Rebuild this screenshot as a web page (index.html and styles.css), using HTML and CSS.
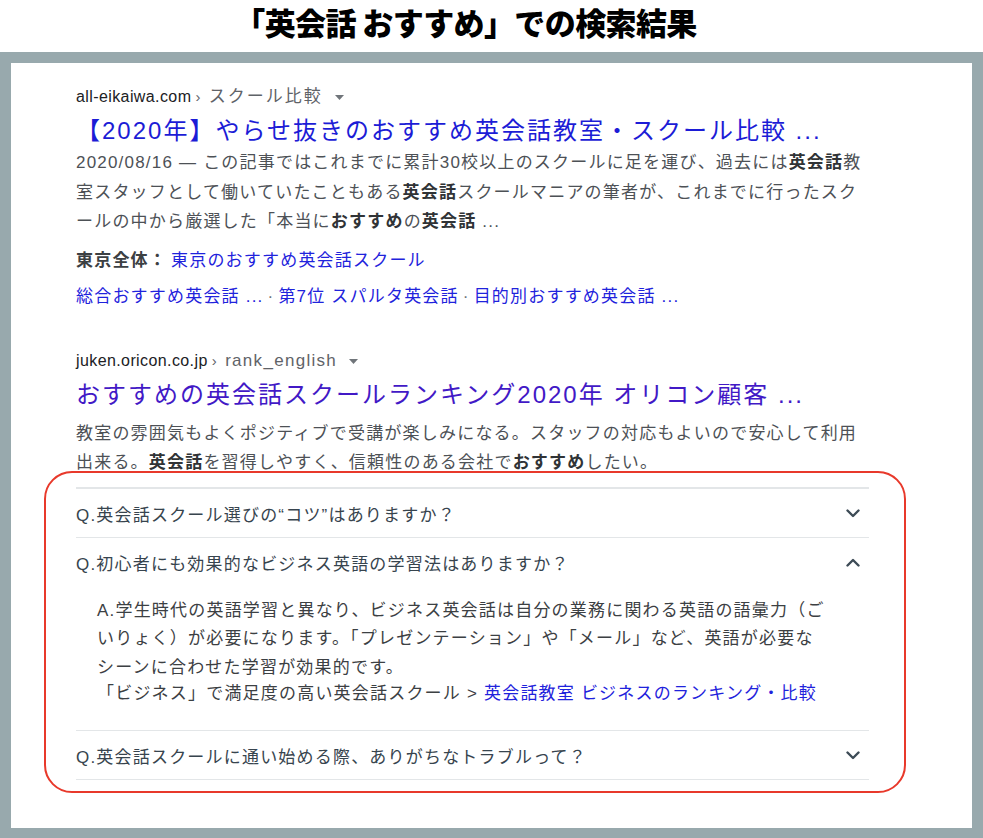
FILE: index.html
```html
<!DOCTYPE html>
<html lang="ja">
<head>
<meta charset="utf-8">
<title>「英会話 おすすめ」での検索結果</title>
<link rel="stylesheet" href="styles.css">
</head>
<body>
<h1 class="heading">「英会話 おすすめ」での検索結果</h1>
<div class="frame">
  <div class="page">
    <div class="result">
      <div class="cite"><span class="domain">all-eikaiwa.com</span><span class="sep">›</span><span class="path">スクール比較</span><svg class="caret" width="9" height="5" viewBox="0 0 9 5"><path d="M0 0h9L4.5 5z" fill="#70757a"/></svg></div>
      <a class="title t1">【2020年】やらせ抜きのおすすめ英会話教室・スクール比較 ...</a>
      <div class="snippet">2020/08/16 — この記事ではこれまでに累計30校以上のスクールに足を運び、過去には<b>英会話</b>教<br>室スタッフとして働いていたこともある<b>英会話</b>スクールマニアの筆者が、これまでに行ったスク<br>ールの中から厳選した「本当に<b>おすすめ</b>の<b>英会話</b> ...</div>
      <div class="sub"><span class="sublabel">東京全体：</span><a class="link">東京のおすすめ英会話スクール</a></div>
      <div class="sitelinks"><a class="link">総合おすすめ英会話 ...</a><span class="dot">·</span><a class="link">第7位 スパルタ英会話</a><span class="dot">·</span><a class="link">目的別おすすめ英会話 ...</a></div>
    </div>
    <div class="result second">
      <div class="cite"><span class="domain">juken.oricon.co.jp</span><span class="sep">›</span><span class="path en">rank_english</span><svg class="caret" width="9" height="5" viewBox="0 0 9 5"><path d="M0 0h9L4.5 5z" fill="#70757a"/></svg></div>
      <a class="title t2">おすすめの英会話スクールランキング2020年 オリコン顧客 ...</a>
      <div class="snippet s2">教室の雰囲気もよくポジティブで受講が楽しみになる。スタッフの対応もよいので安心して利用<br>出来る。<b>英会話</b>を習得しやすく、信頼性のある会社で<b>おすすめ</b>したい。</div>
    </div>
    <div class="faq">
      <div class="faq-list">
        <div class="faq-item">
          <div class="q"><span>Q.英会話スクール選びの“コツ”はありますか？</span><svg class="chev" width="14" height="9" viewBox="0 0 14 9"><path d="M1.5 1.5L7 7l5.5-5.5" fill="none" stroke="#3d4b56" stroke-width="2.4" stroke-linecap="round" stroke-linejoin="round"/></svg></div>
        </div>
        <div class="faq-item">
          <div class="q"><span>Q.初心者にも効果的なビジネス英語の学習法はありますか？</span><svg class="chev" width="14" height="9" viewBox="0 0 14 9"><path d="M1.5 7.5L7 2l5.5 5.5" fill="none" stroke="#3d4b56" stroke-width="2.4" stroke-linecap="round" stroke-linejoin="round"/></svg></div>
          <div class="answer">
            <p class="answer-text">A.学生時代の英語学習と異なり、ビジネス英会話は自分の業務に関わる英語の語彙力（ご<br>いりょく）が必要になります。「プレゼンテーション」や「メール」など、英語が必要な<br>シーンに合わせた学習が効果的です。</p>
            <div class="answer-link">「ビジネス」で満足度の高い英会話スクール &gt; <a class="link">英会話教室 ビジネスのランキング・比較</a></div>
          </div>
        </div>
        <div class="faq-item">
          <div class="q"><span>Q.英会話スクールに通い始める際、ありがちなトラブルって？</span><svg class="chev" width="14" height="9" viewBox="0 0 14 9"><path d="M1.5 1.5L7 7l5.5-5.5" fill="none" stroke="#3d4b56" stroke-width="2.4" stroke-linecap="round" stroke-linejoin="round"/></svg></div>
        </div>
      </div>
    </div>
  </div>
</div>
</body>
</html>
```
FILE: styles.css
```css
html, body {
  margin: 0;
  padding: 0;
  background: #ffffff;
}
body {
  width: 983px;
  height: 838px;
  overflow: hidden;
  font-family: "Liberation Sans", "Noto Sans CJK JP", sans-serif;
}
.heading {
  margin: 0;
  height: 52px;
  padding: 0 52px 0 0;
  line-height: 44px;
  font-family: "Noto Sans CJK JP", sans-serif;
  font-weight: 900;
  font-size: 31px;
  letter-spacing: -0.6px;
  color: #000;
  text-align: center;
  box-sizing: border-box;
}
.frame {
  height: 786px;
  box-sizing: border-box;
  padding: 11px 11px 10px 11px;
  background: #98a9ad;
}
.page {
  height: 765px;
  box-sizing: border-box;
  background: #ffffff;
  padding: 21px 0 0 33px;
}
.result {
  padding-left: 32px;
}
.result.second {
  margin-top: 36px;
}
.cite {
  display: flex;
  align-items: center;
  height: 26px;
  line-height: 26px;
  font-size: 16px;
  letter-spacing: 0.4px;
  color: #202124;
}
.sep {
  color: #5f6368;
  margin: 0 8px 0 4px;
  font-size: 15px;
}
.path {
  color: #5f6368;
  font-size: 17px;
  letter-spacing: 2px;
}
.path.en {
  font-size: 17px;
  letter-spacing: 1.3px;
}
.caret {
  margin-left: 12px;
}
.title {
  display: block;
  margin-top: 4px;
  height: 34px;
  line-height: 34px;
  font-size: 24px;
  letter-spacing: 2px;
  white-space: nowrap;
}
.t1 {
  color: #1c1cd6;
}
.t2 {
  color: #4219c6;
}
.snippet {
  font-size: 17px;
  line-height: 29.5px;
  letter-spacing: 1.2px;
  color: #4d5156;
  white-space: nowrap;
}
.snippet b {
  color: #303336;
}
.snippet.s2 {
  margin-top: 7px;
  line-height: 29px;
}
.sub {
  margin-top: 9.5px;
  line-height: 30px;
  font-size: 17px;
  letter-spacing: 1.2px;
}
.sublabel {
  font-weight: bold;
  color: #3c4043;
  margin-right: 4px;
}
.link {
  color: #1f23dc;
}
.sitelinks {
  margin-top: 6px;
  line-height: 30px;
  font-size: 17px;
  letter-spacing: 1.2px;
}
.dot {
  color: #70757a;
  margin: 0 4px;
}
.faq {
  margin-top: -6px;
  width: 862px;
  box-sizing: border-box;
  border: 2px solid #e8392b;
  border-radius: 28px;
  padding: 14px 35px 11px 30px;
}
.faq-list {
  border-top: 2px solid #e3e6e8;
}
.faq-item {
  border-bottom: 1px solid #e3e6e8;
}
.q {
  height: 48px;
  display: flex;
  align-items: center;
  justify-content: space-between;
  padding-right: 9px;
  font-size: 17px;
  letter-spacing: 1.2px;
  color: #37444e;
}
.answer {
  padding: 10.75px 0 23.75px 21px;
  font-size: 17px;
  letter-spacing: 1.2px;
  color: #3c4043;
  white-space: nowrap;
}
.answer-text {
  margin: 0;
  line-height: 28.5px;
}
.answer-link {
  line-height: 24px;
}
```
